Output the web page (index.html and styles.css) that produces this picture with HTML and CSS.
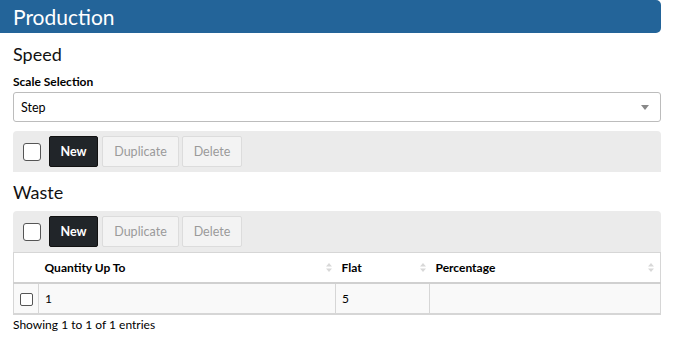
FILE: index.html
```html
<!DOCTYPE html>
<html>
<head>
<meta charset="utf-8">
<link rel="stylesheet" href="styles.css">
</head>
<body>
<div class="panel">
  <div class="panel-heading">Production</div>
  <div class="panel-body">
    <h4 class="section-title">Speed</h4>
    <label class="field-label">Scale Selection</label>
    <div class="select">
      <span>Step</span>
      <svg class="caret" width="8" height="5" viewBox="0 0 8 5"><path d="M0 0h8L4 5z" fill="#888"/></svg>
    </div>
    <div class="toolbar">
      <span class="chk-lg"></span>
      <button class="btn btn-dark">New</button>
      <button class="btn btn-disabled">Duplicate</button>
      <button class="btn btn-disabled">Delete</button>
    </div>
    <h4 class="section-title waste">Waste</h4>
    <div class="toolbar">
      <span class="chk-lg"></span>
      <button class="btn btn-dark">New</button>
      <button class="btn btn-disabled">Duplicate</button>
      <button class="btn btn-disabled">Delete</button>
    </div>
    <table class="grid">
      <colgroup>
        <col class="c0"><col class="c1"><col class="c2"><col class="c3">
      </colgroup>
      <thead>
        <tr>
          <th></th>
          <th><div class="th-in"><span>Quantity Up To</span><svg class="sort" width="6" height="9" viewBox="0 0 6 9"><path d="M3 0L6 3.5H0z M0 5.5h6L3 9z" fill="#d8d8d8"/></svg></div></th>
          <th><div class="th-in"><span>Flat</span><svg class="sort" width="6" height="9" viewBox="0 0 6 9"><path d="M3 0L6 3.5H0z M0 5.5h6L3 9z" fill="#d8d8d8"/></svg></div></th>
          <th><div class="th-in"><span>Percentage</span><svg class="sort" width="6" height="9" viewBox="0 0 6 9"><path d="M3 0L6 3.5H0z M0 5.5h6L3 9z" fill="#d8d8d8"/></svg></div></th>
        </tr>
      </thead>
      <tbody>
        <tr>
          <td class="chk-cell"><span class="chk-sm"></span></td>
          <td>1</td>
          <td>5</td>
          <td></td>
        </tr>
      </tbody>
    </table>
    <div class="info">Showing 1 to 1 of 1 entries</div>
  </div>
</div>
</body>
</html>
```

FILE: styles.css
```css
* { box-sizing: border-box; }
body {
  margin: 0;
  font-family: "Lato", "Liberation Sans", sans-serif;
  color: #111;
  background: #fff;
}
.panel { width: 661px; }
.panel-heading {
  background: #236499;
  color: #fff;
  font-size: 21px;
  height: 33px;
  line-height: 33px;
  padding-left: 13px;
  border-radius: 0 5px 5px 0;
}
.panel-body { padding-left: 13px; }
.section-title {
  margin: 0;
  font-weight: 400;
  font-size: 18px;
  line-height: 24px;
  padding-top: 9px;
  height: 45px;
  color: #111;
}
.section-title.waste { padding-top: 8px; height: 39px; }
.field-label {
  display: block;
  font-weight: 700;
  font-size: 12px;
  line-height: 16px;
  margin-top: -4px;
  margin-bottom: 2px;
  color: #000;
}
.select {
  height: 30px;
  border: 1px solid #bcbcbc;
  border-radius: 3px;
  display: flex;
  align-items: center;
  justify-content: space-between;
  padding: 0 11px 0 7px;
  font-size: 12.5px;
  margin-bottom: 9px;
  color: #000;
}
.toolbar {
  background: #ebebeb;
  height: 41px;
  border-radius: 4px 4px 0 0;
  display: flex;
  align-items: center;
  padding-left: 10px;
  gap: 4px;
}
.chk-lg {
  width: 18px; height: 18px;
  border: 1px solid #555;
  border-radius: 3px;
  background: #fff;
  margin-right: 4px;
}
.btn {
  font-family: inherit;
  font-size: 12.5px;
  height: 31px;
  border-radius: 2px;
  padding: 0;
  margin: 0;
}
.btn-dark {
  background: #212529;
  border: 1px solid #111;
  color: #fff;
  width: 49px;
  font-weight: 700;
}
.btn-disabled {
  background: #f3f3f3;
  border: 1px solid #dcdcdc;
  color: #9a9a9a;
}
.btn-disabled:nth-of-type(2) { width: 77px; }
.btn-disabled:nth-of-type(3) { width: 60px; margin-left: -1px; }
.grid {
  width: 648px;
  border-collapse: collapse;
  font-size: 12px;
  color: #000;
}
.c0 { width: 25px; }
.c1 { width: 297px; }
.c2 { width: 94px; }
.grid th {
  text-align: left;
  font-weight: 700;
  height: 30px;
  padding: 0 4px 0 6px;
  border-top: 1px solid #d6d6d6;
  border-bottom: 2px solid #d0d0d0;
}
.grid th:first-child { border-left: 1px solid #d6d6d6; }
.grid th:last-child { border-right: 1px solid #d6d6d6; padding-right: 6px; }
.th-in { display: flex; justify-content: space-between; align-items: center; }
.grid td {
  background: #f9f9f9;
  height: 31px;
  padding: 0 6px;
  border: 1px solid #d6d6d6;
  border-top: 0;
  border-bottom: 2px solid #d6d6d6;
}
.chk-cell { padding: 0 !important; text-align: center; }
.chk-sm {
  display: inline-block;
  vertical-align: middle;
  width: 13px; height: 13px;
  border: 1px solid #555;
  border-radius: 2px;
  background: #fff;
}
.info { font-size: 12px; padding-top: 2px; color: #000; }
```
